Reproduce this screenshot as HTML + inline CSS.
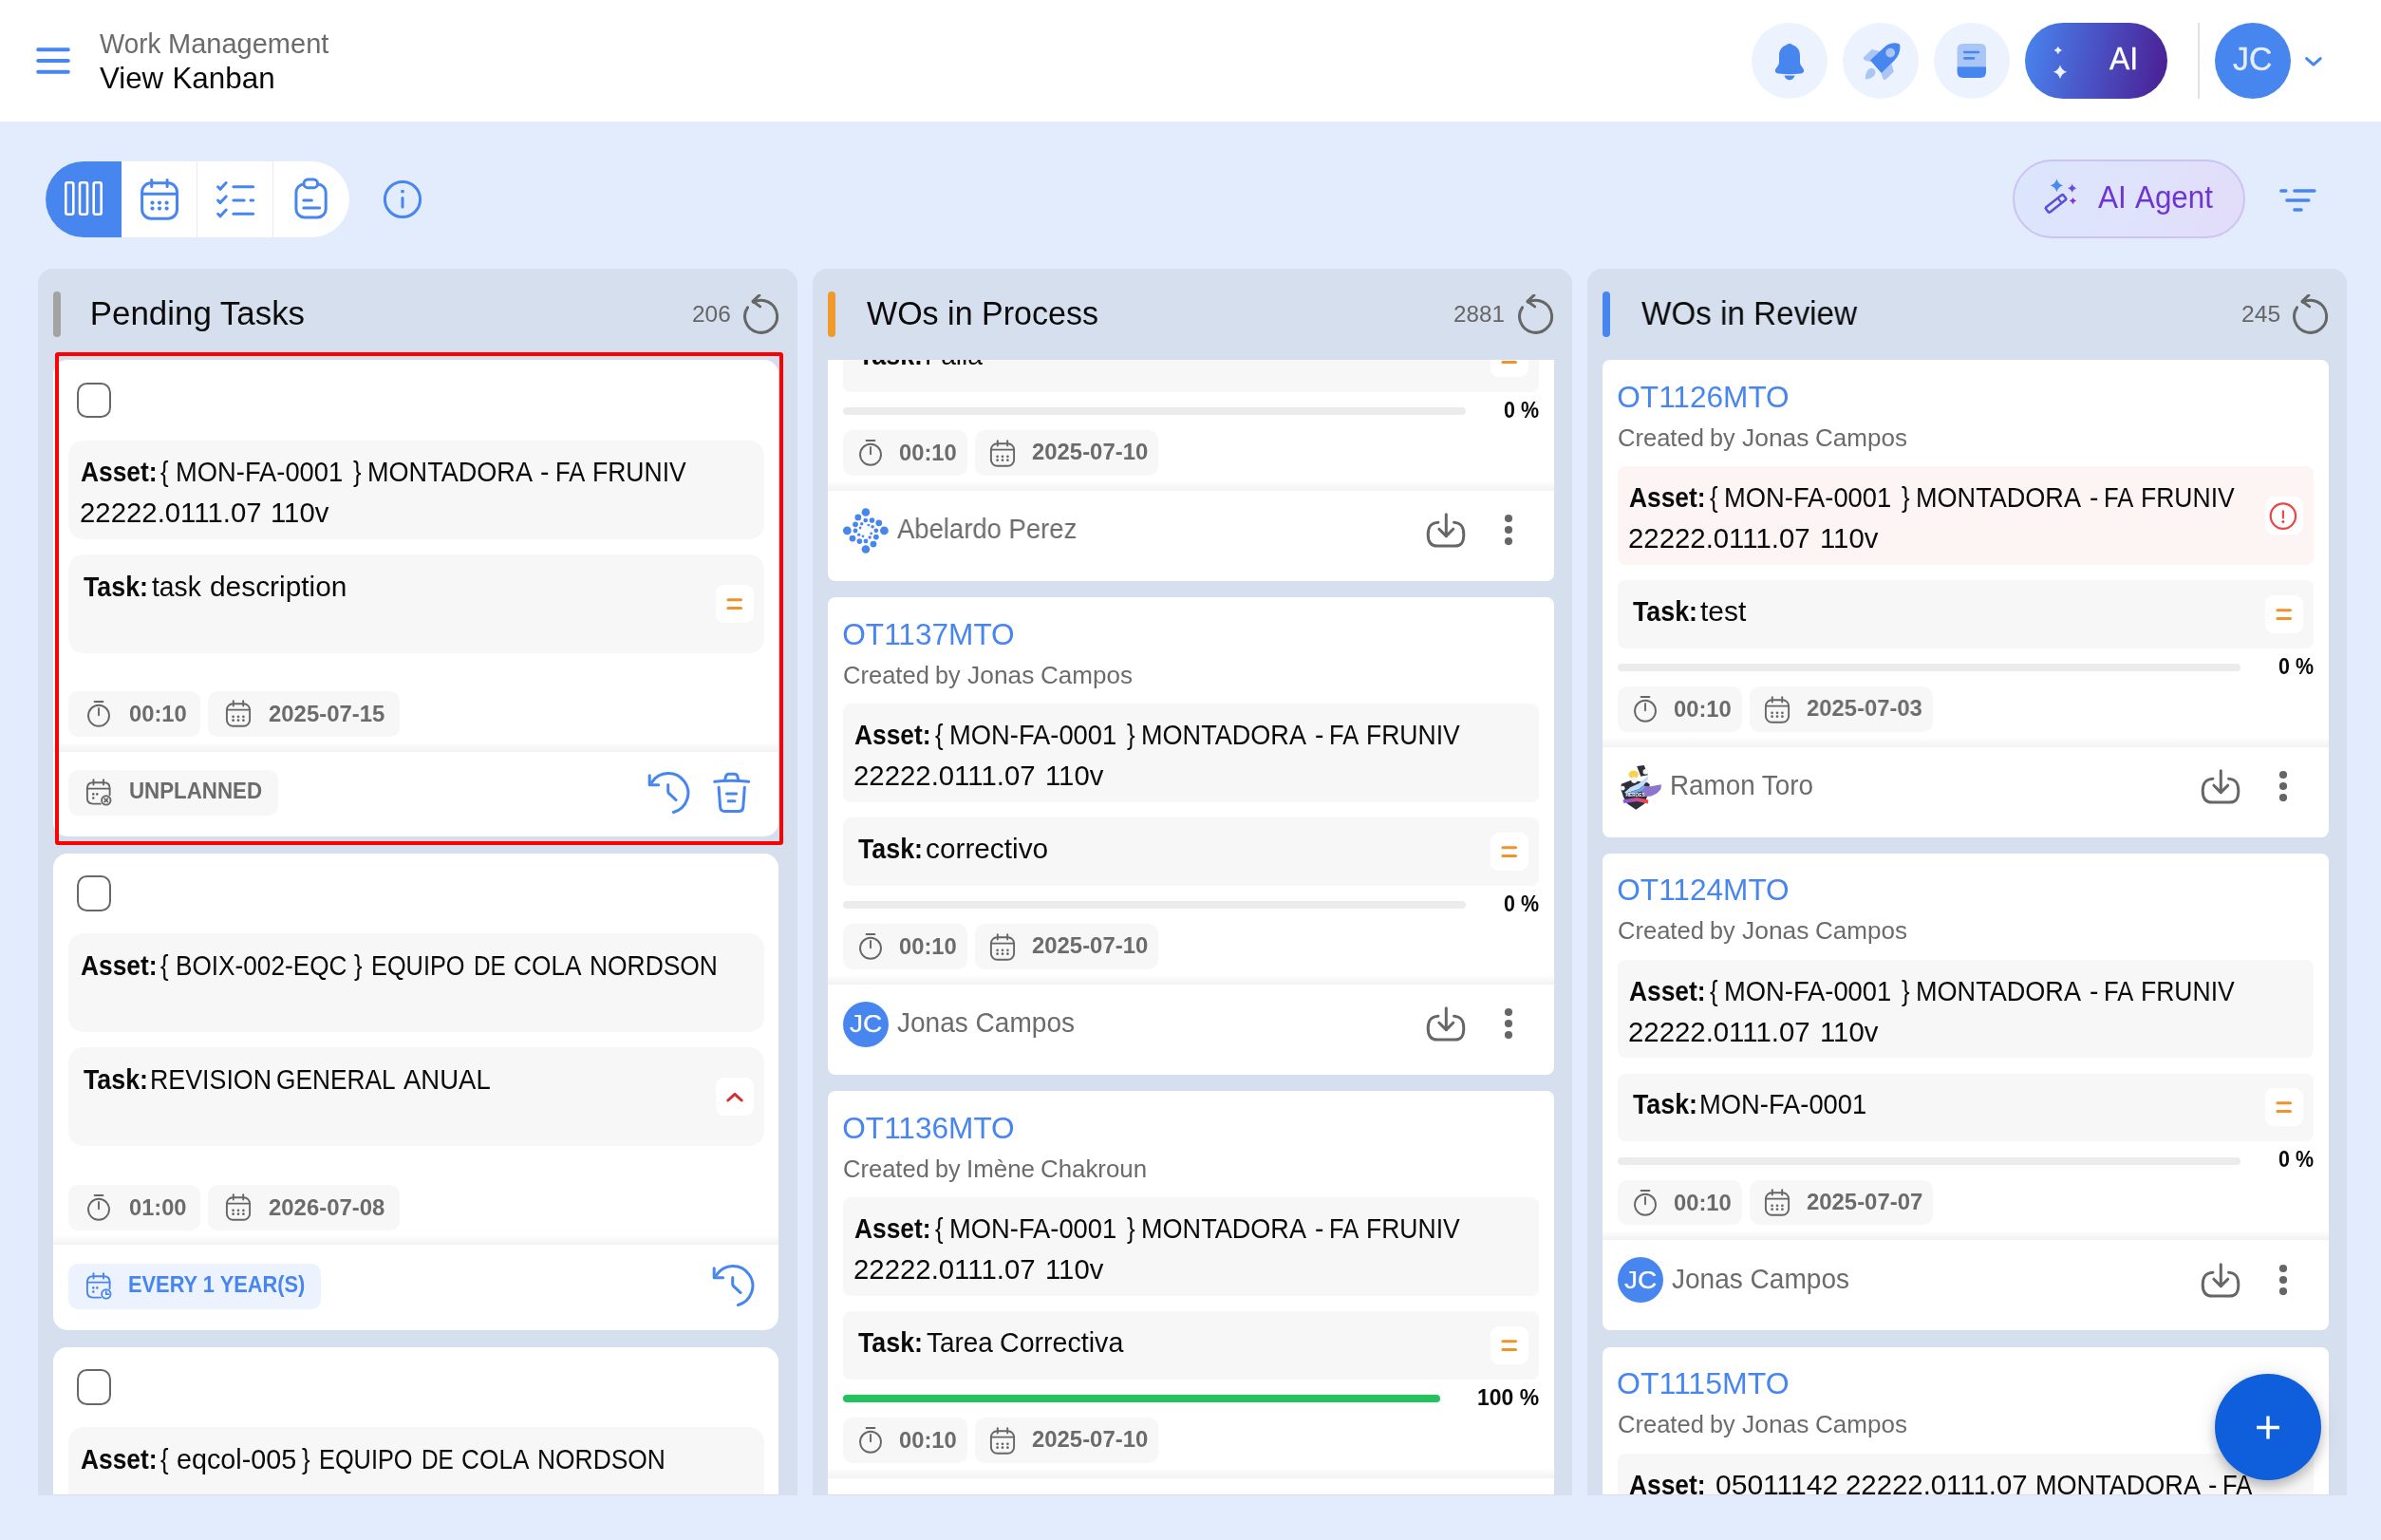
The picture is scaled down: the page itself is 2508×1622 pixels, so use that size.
<!DOCTYPE html><html lang="en"><head><meta charset="utf-8"><title>View Kanban - Work Management</title><style>

html,body{margin:0;padding:0}
body{width:2508px;height:1622px;overflow:hidden;position:relative;background:#e3ecfd;font-family:"Liberation Sans",sans-serif;}
.pg{position:absolute;left:0;top:0;width:2508px;height:1622px;will-change:transform}
@media (max-width:1400px){body{width:1254px;height:811px}.pg{zoom:.5}}
.t{position:absolute;white-space:nowrap;transform-origin:0 0}
.hdr{position:absolute;left:0;top:0;width:2508px;height:128px;background:#fff}
.col{position:absolute;top:283px;width:800px;height:1292px;background:#d5dfed;border-radius:16px 16px 0 0;overflow:hidden}
.colhead{position:absolute;left:0;top:0;width:800px;height:96.25px;background:#d5dfed}
.cards{position:absolute;left:0;top:96.25px;width:800px;height:1195px;overflow:hidden}
.card{position:absolute;left:16px;width:764px;background:#fff;border-radius:15px;overflow:hidden}
.cb{border-radius:8px}
.redbox{position:absolute;left:58.1px;top:370.9px;width:758.5px;height:510.9px;border:4.7px solid #ff0000;border-radius:3px}
.fab{position:absolute;left:2332.8px;top:1446.6px;width:112px;height:112px;border-radius:50%;background:#0f5fdd;box-shadow:0 6px 12px rgba(0,0,0,.22),0 2px 24px rgba(0,0,0,.10)}

</style></head><body><div class="pg">
<div class="hdr"><svg style="position:absolute;left:36px;top:48px" width="40" height="32" viewBox="0 0 40 32" fill="none"><path d="M4.2 4.3 H35.8 M4.2 16 H35.8 M4.2 27.8 H35.8" stroke="#4886ef" stroke-width="4" stroke-linecap="round"/></svg><div class="t" style="left:104.90px;top:27.79px;font-size:29.8px;line-height:35.76px;color:#6b6b6b;transform:scaleX(0.9316);">Work</div><div class="t" style="left:176.53px;top:27.79px;font-size:29.8px;line-height:35.76px;color:#6b6b6b;transform:scaleX(0.9737);">Management</div><div class="t" style="left:104.90px;top:63.78px;font-size:31.4px;line-height:37.68px;color:#0a0a0a;transform:scaleX(0.9959);">View</div><div class="t" style="left:181.45px;top:63.78px;font-size:31.4px;line-height:37.68px;color:#0a0a0a;">Kanban</div><div style="position:absolute;left:1845px;top:24px;width:80px;height:80px;border-radius:50%;background:#ecf2fe"></div><div style="position:absolute;left:1941px;top:24px;width:80px;height:80px;border-radius:50%;background:#ecf2fe"></div><div style="position:absolute;left:2037px;top:24px;width:80px;height:80px;border-radius:50%;background:#ecf2fe"></div><svg style="position:absolute;left:1865px;top:44px;" width="40" height="42" viewBox="0 0 40 42" fill="none"><path d="M20 1.9 C21.6 1.9 22.6 2.6 23.6 3.6 C28.6 5.6 31 9.4 31 15 V21.5 C31 23.6 32.2 25.4 33.9 27.6 C36.4 30.8 35 33.3 31.4 33.6 C23.8 34.4 16.2 34.4 8.6 33.6 C5 33.3 3.6 30.8 6.1 27.6 C7.8 25.4 9 23.6 9 21.5 V15 C9 9.4 11.4 5.6 16.4 3.6 C17.4 2.6 18.4 1.9 20 1.9 Z" fill="#4886ef"/><path d="M14.4 35.6 H25.6 C24.6 38.6 22.6 40.3 20 40.3 C17.4 40.3 15.4 38.6 14.4 35.6 Z" fill="#4886ef"/></svg><svg style="position:absolute;left:1961px;top:44px;" width="42" height="42" viewBox="0 0 42 42" fill="none"><path d="M10.7 7.9 L20 10.2 L9.2 21 L3.4 19.4 C1.6 18.9 1.2 17 2.5 15.8 Z" fill="#a9c6f7"/><path d="M31.5 22.9 L33.9 31.6 L25.8 39.3 C24.4 40.6 22.7 40.1 22.2 38.4 L20.4 32.8 Z" fill="#a9c6f7"/><path d="M3.9 39.6 C3.6 34.6 5.2 30.2 8.2 28.4 C11.4 26.6 15 29.6 14.4 33 C13.8 36.4 9.8 39 3.9 39.6 Z" fill="#a9c6f7"/><path d="M9 19.6 L25.2 4.6 C29.6 1.2 35.2 0.8 38.8 1.9 C40.3 2.4 40.3 3.6 40.4 5 C40.6 10.2 38.6 15.6 34.6 19.6 L20.8 33 Z" fill="#4886ef"/><circle cx="30.2" cy="11.6" r="4.9" fill="#a9c6f7"/></svg><svg style="position:absolute;left:2060px;top:44px;" width="34" height="40" viewBox="0 0 34 40" fill="none"><path d="M1.6 8 Q1.6 1.9 7.7 1.9 H26 Q32 1.9 32 8 V26.2 H1.6 Z" fill="#a9c6f7"/><path d="M1.6 26.2 H32 V31.8 Q32 38 26 38 H7.7 Q1.6 38 1.6 31.8 Z" fill="#4886ef"/><path d="M9.3 11 H24 M9.3 17.4 H19" stroke="#4886ef" stroke-width="2.6" stroke-linecap="round"/></svg><div style="position:absolute;left:2133px;top:24px;width:150px;height:80px;border-radius:40px;background:linear-gradient(100deg,#4886ef 0%,#4a52c4 48%,#4a1d92 100%)"></div><svg style="position:absolute;left:2150px;top:40px;" width="40" height="48" viewBox="0 0 40 48" fill="none"><path d="M17.8 8.8 Q18.724 12.076 22.0 13 Q18.724 13.924 17.8 17.2 Q16.876 13.924 13.600000000000001 13 Q16.876 12.076 17.8 8.8 Z" fill="#eef1ff"/><path d="M20 28.500000000000004 Q21.584 34.116 27.2 35.7 Q21.584 37.284000000000006 20 42.900000000000006 Q18.416 37.284000000000006 12.8 35.7 Q18.416 34.116 20 28.500000000000004 Z" fill="#eef1ff"/></svg><div class="t" style="left:2222.20px;top:43.23px;font-size:32.4px;line-height:38.88px;color:#fff;transform:scaleX(0.9825);-webkit-text-stroke:0.3px #fff;">AI</div><div style="position:absolute;left:2315px;top:24px;width:2px;height:80px;background:#e2e2e2"></div><div style="position:absolute;left:2333px;top:24px;width:80px;height:80px;border-radius:50%;background:#4886ef"></div><div class="t" style="left:2352.47px;top:40.58px;font-size:35.2px;line-height:42.24px;color:#e6eefd;transform:scaleX(0.9624);-webkit-text-stroke:0.35px #e6eefd;">JC</div><svg style="position:absolute;left:2424px;top:56px;" width="26" height="18" viewBox="0 0 26 18" fill="none"><path d="M5.6 5.6 L12.9 12.2 L20.2 5.6" stroke="#4886ef" stroke-width="3" stroke-linecap="round" stroke-linejoin="round"/></svg></div>
<div style="position:absolute;left:48px;top:169.5px;width:320px;height:80px;border-radius:40px;background:#fff;overflow:hidden"><div style="position:absolute;left:0;top:0;width:80px;height:80px;background:#4886ef"></div><div style="position:absolute;left:159px;top:0;width:1px;height:80px;background:#e4ecfd"></div><div style="position:absolute;left:239px;top:0;width:1px;height:80px;background:#e4ecfd"></div></div><svg style="position:absolute;left:66px;top:189px;" width="44" height="40" viewBox="0 0 44 40" fill="none"><g stroke="#fff" stroke-width="2.6"><rect x="3.3" y="3.3" width="8" height="33.4" rx="2"/><rect x="18" y="3.3" width="8" height="33.4" rx="2"/><rect x="32.7" y="3.3" width="8" height="33.4" rx="2"/></g></svg><svg style="position:absolute;left:146px;top:186px;" width="44" height="48" viewBox="0 0 44 48" fill="none"><g stroke="#4886ef" stroke-width="3" stroke-linecap="round"><rect x="3.6" y="6.7" width="36.9" height="37.5" rx="9.6"/><path d="M13.7 3.6 V10.6 M30.1 3.6 V10.6"/><path d="M4 18.3 H40"/></g><g fill="#4886ef"><circle cx="14.5" cy="27.6" r="2.1"/><circle cx="22" cy="27.6" r="2.1"/><circle cx="29.6" cy="27.6" r="2.1"/><circle cx="14.5" cy="33.6" r="2.1"/><circle cx="22" cy="33.6" r="2.1"/><circle cx="29.6" cy="33.6" r="2.1"/></g></svg><svg style="position:absolute;left:226px;top:188px;" width="46" height="44" viewBox="0 0 46 44" fill="none"><g stroke="#4886ef" stroke-width="3" stroke-linecap="round" stroke-linejoin="round"><path d="M3.6 8.8 L6 11.3 L12.2 4.6"/><path d="M3.6 23.1 L6 25.6 L12.2 18.9"/><path d="M3.6 37.3 L6 39.8 L12.2 33.1"/><path d="M19.9 8.7 H40.6"/><path d="M19.9 23 H31.2"/><path d="M38 23 H40.6"/><path d="M19.9 37.2 H40.6"/></g></svg><svg style="position:absolute;left:308px;top:185px;" width="40" height="48" viewBox="0 0 40 48" fill="none"><g stroke="#4886ef" stroke-width="3" stroke-linecap="round"><rect x="3.9" y="8.9" width="31.3" height="35.1" rx="8.8"/><rect x="12" y="4.1" width="14.6" height="8.6" rx="4.3" fill="#fff"/><path d="M11.8 26 H20.4 M11.8 34.1 H28.6"/></g></svg><svg style="position:absolute;left:402px;top:187.5px;" width="44" height="44" viewBox="0 0 44 44" fill="none"><circle cx="22" cy="22" r="18.6" stroke="#4886ef" stroke-width="3"/><path d="M22 20.4 V30" stroke="#4886ef" stroke-width="3" stroke-linecap="round"/><circle cx="22" cy="13.6" r="1.9" fill="#4886ef"/></svg><div style="position:absolute;left:2120px;top:168px;width:244.5px;height:83px;box-sizing:border-box;border:2px solid #cdc2f1;border-radius:42px;background:linear-gradient(110deg,#dbe6fd 0%,#dfe2fb 55%,#e3dcf9 100%)"></div><svg style="position:absolute;left:2153.2px;top:187.2px;" width="40" height="40" viewBox="0 0 40 40" fill="none"><path d="M13.4 1.4000000000000004 Q14.918000000000001 6.782000000000001 20.3 8.3 Q14.918000000000001 9.818000000000001 13.4 15.200000000000001 Q11.882 9.818000000000001 6.5 8.3 Q11.882 6.782000000000001 13.4 1.4000000000000004 Z" fill="#4a8af0"/><path d="M29.7 6.6 Q30.712 10.187999999999999 34.3 11.2 Q30.712 12.212 29.7 15.799999999999999 Q28.688 12.212 25.1 11.2 Q28.688 10.187999999999999 29.7 6.6 Z" fill="#6a50e0"/><path d="M30.5 21.0 Q31.292 23.808 34.1 24.6 Q31.292 25.392000000000003 30.5 28.200000000000003 Q29.708 25.392000000000003 26.9 24.6 Q29.708 23.808 30.5 21.0 Z" fill="#8a2bd8"/><g transform="rotate(-38 12.4 27.4)"><rect x="0.8" y="24.2" width="23.4" height="6.6" rx="1.6" stroke="#5b4fd6" stroke-width="2.5"/><path d="M17.6 24.2 V30.8" stroke="#5b4fd6" stroke-width="2.2"/></g></svg><div class="t" style="left:2210.10px;top:188.45px;font-size:32.7px;line-height:39.24px;color:#6f35d3;transform:scaleX(0.9663);">AI</div><div class="t" style="left:2248.60px;top:188.45px;font-size:32.7px;line-height:39.24px;color:#6f35d3;transform:scaleX(0.9583);">Agent</div><svg style="position:absolute;left:2398px;top:196px;" width="46" height="30" viewBox="0 0 46 30" fill="none"><g stroke="#4886ef" stroke-width="3.4" stroke-linecap="round"><path d="M4.8 5 H9.9"/><path d="M18.9 5 H39.9"/><path d="M10.9 15 H33.8"/><path d="M18.9 25 H26"/></g></svg>
<div class="col" style="left:40px"><div class="cards"><div class="card" style="top:0px;height:502.2px"><div style="position:absolute;left:25.2px;top:23.4px;width:36px;height:37.4px;box-sizing:border-box;border:2px solid #686868;border-radius:10.5px"></div><div style="position:absolute;left:16px;top:84.7px;width:732.5px;height:103.6px;background:#f7f7f7;border-radius:16px"></div><div class="t" style="left:28.59px;top:99.88px;font-size:29.6px;line-height:35.52px;color:#0a0a0a;font-weight:700;transform:scaleX(0.8908);">Asset:</div><div class="t" style="left:113.10px;top:99.88px;font-size:29.6px;line-height:35.52px;color:#0a0a0a;transform:scaleX(0.8649);">{</div><div class="t" style="left:128.87px;top:99.88px;font-size:29.6px;line-height:35.52px;color:#0a0a0a;transform:scaleX(0.9237);">MON-FA-0001</div><div class="t" style="left:315.60px;top:99.88px;font-size:29.6px;line-height:35.52px;color:#0a0a0a;transform:scaleX(0.8649);">}</div><div class="t" style="left:330.64px;top:99.88px;font-size:29.6px;line-height:35.52px;color:#0a0a0a;transform:scaleX(0.9147);">MONTADORA</div><div class="t" style="left:513.11px;top:99.88px;font-size:29.6px;line-height:35.52px;color:#0a0a0a;transform:scaleX(0.9539);">-</div><div class="t" style="left:528.75px;top:99.88px;font-size:29.6px;line-height:35.52px;color:#0a0a0a;transform:scaleX(0.8641);">FA</div><div class="t" style="left:567.68px;top:99.88px;font-size:29.6px;line-height:35.52px;color:#0a0a0a;transform:scaleX(0.8958);">FRUNIV</div><div class="t" style="left:27.62px;top:143.08px;font-size:29.6px;line-height:35.52px;color:#0a0a0a;transform:scaleX(0.9919);">22222.0111.07</div><div class="t" style="left:229.17px;top:143.08px;font-size:29.6px;line-height:35.52px;color:#0a0a0a;transform:scaleX(0.9894);">110v</div><div style="position:absolute;left:16px;top:204.7px;width:732.5px;height:103.6px;background:#f7f7f7;border-radius:16px"></div><div class="t" style="left:32.00px;top:220.58px;font-size:29.6px;line-height:35.52px;color:#0a0a0a;font-weight:700;transform:scaleX(0.9048);">Task:</div><div class="t" style="left:103.70px;top:220.58px;font-size:29.6px;line-height:35.52px;color:#0a0a0a;transform:scaleX(0.9553);">task</div><div class="t" style="left:164.76px;top:220.58px;font-size:29.6px;line-height:35.52px;color:#0a0a0a;transform:scaleX(1.0096);">description</div><div style="position:absolute;left:697.8px;top:236.6px;width:40px;height:40px;border-radius:9px;background:#fff"><svg width="40" height="40" viewBox="0 0 40 40" fill="none" style="display:block"><path d="M12.9 15.8 H26.5 M12.9 24.4 H26.5" stroke="#f0932b" stroke-width="3" stroke-linecap="round"/></svg></div><div style="position:absolute;left:16px;top:348.9px;width:139.3px;height:48px;border-radius:10px;background:#f7f7f7"><svg style="position:absolute;left:19px;top:8.9px;" width="26" height="30" viewBox="0 0 26 30" fill="none"><g stroke="#666" stroke-width="1.9" stroke-linecap="round"><circle cx="13" cy="16.8" r="11"/><path d="M8.6 2 H17.4"/><path d="M13 9 V16.2"/></g></svg><div class="t" style="left:63.65px;top:9.13px;font-size:24.8px;line-height:29.76px;color:#6b6b6b;font-weight:700;transform:scaleX(0.9570);">00:10</div></div><div style="position:absolute;left:163.3px;top:348.9px;width:201.4px;height:48px;border-radius:10px;background:#f7f7f7"><svg style="position:absolute;left:17.8px;top:9.1px;" width="28" height="30" viewBox="0 0 28 30" fill="none"><g stroke="#666" stroke-width="1.9" stroke-linecap="round"><rect x="1.9" y="4.2" width="24.2" height="23.6" rx="6.5"/><path d="M8.8 1.2 V6.6"/><path d="M19.2 1.2 V6.6"/><path d="M2.2 10.6 H25.8"/></g><g fill="#666"><circle cx="8.6" cy="17.8" r="1.35"/><circle cx="14" cy="17.8" r="1.35"/><circle cx="19.4" cy="17.8" r="1.35"/><circle cx="8.6" cy="21.7" r="1.35"/><circle cx="14" cy="21.7" r="1.35"/><circle cx="19.4" cy="21.7" r="1.35"/></g></svg><div class="t" style="left:63.85px;top:9.13px;font-size:24.8px;line-height:29.76px;color:#6b6b6b;font-weight:700;transform:scaleX(0.9644);">2025-07-15</div></div><div style="position:absolute;left:0;top:402.2px;width:764px;height:10.5px;background:linear-gradient(#fff,#f2f2f2)"></div><div style="position:absolute;left:16px;top:432.1px;width:220.6px;height:48px;border-radius:10px;background:#f7f7f7"><svg style="position:absolute;left:17.6px;top:9px;" width="30" height="30" viewBox="0 0 30 30" fill="none"><g stroke="#666" stroke-width="1.9" stroke-linecap="round"><path d="M16 26.6 H8 Q1.9 26.6 1.9 20.5 V10.3 Q1.9 4.2 8 4.2 H19.5 Q25.6 4.2 25.6 10.3 V17.2"/><path d="M8.5 1.2 V6.6"/><path d="M19 1.2 V6.6"/><path d="M2.2 10.6 H25.4"/><circle cx="21.8" cy="22.9" r="4.7"/><path d="M20.1 21.2 L23.5 24.6 M23.5 21.2 L20.1 24.6" stroke-width="1.7"/></g><g fill="#666"><circle cx="8.3" cy="16.4" r="1.3"/><circle cx="12.3" cy="16.4" r="1.3"/><circle cx="8.3" cy="20.6" r="1.3"/></g></svg><div class="t" style="left:63.96px;top:6.63px;font-size:24.8px;line-height:29.76px;color:#6b6b6b;font-weight:700;transform:scaleX(0.9000);">UNPLANNED</div></div><svg style="position:absolute;left:626px;top:433.5px;" width="46" height="46" viewBox="0 0 46 46" fill="none"><g stroke="#4886ef" stroke-width="3" stroke-linecap="round" stroke-linejoin="round"><path d="M4.55 11.15 A20.8 20.8 0 1 1 27.4 42.5"/><path d="M2.2 3.75 V13.85 H11.6"/><path d="M21.7 13.5 V20 Q21.7 22.6 24 23.9 L30.1 29.6"/></g></svg><svg style="position:absolute;left:694px;top:432.6px;" width="42" height="46" viewBox="0 0 42 46" fill="none"><g stroke="#4886ef" stroke-width="3" stroke-linecap="round" stroke-linejoin="round"><path d="M2.7 11.3 Q20.7 9 38.7 11.3"/><path d="M13.5 9.9 L14.6 5.6 Q15.2 3.2 17.6 3.2 H23.8 Q26.2 3.2 26.8 5.6 L27.8 9.9"/><path d="M7.1 17.3 L8.6 38 Q9 42.5 13.5 42.5 H28 Q32.4 42.5 32.8 38 L34.3 17.3"/><path d="M15.5 24 H25.6"/><path d="M17.2 31.7 H23.9"/></g></svg></div><div class="card" style="top:519.5px;height:502.2px"><div style="position:absolute;left:25.2px;top:23.4px;width:36px;height:37.4px;box-sizing:border-box;border:2px solid #686868;border-radius:10.5px"></div><div style="position:absolute;left:16px;top:84.7px;width:732.5px;height:103.6px;background:#f7f7f7;border-radius:16px"></div><div class="t" style="left:28.59px;top:99.88px;font-size:29.6px;line-height:35.52px;color:#0a0a0a;font-weight:700;transform:scaleX(0.8908);">Asset:</div><div class="t" style="left:113.10px;top:99.88px;font-size:29.6px;line-height:35.52px;color:#0a0a0a;transform:scaleX(0.8649);">{</div><div class="t" style="left:129.46px;top:99.88px;font-size:29.6px;line-height:35.52px;color:#0a0a0a;transform:scaleX(0.8847);">BOIX-002-EQC</div><div class="t" style="left:316.60px;top:99.88px;font-size:29.6px;line-height:35.52px;color:#0a0a0a;transform:scaleX(0.8649);">}</div><div class="t" style="left:334.52px;top:99.88px;font-size:29.6px;line-height:35.52px;color:#0a0a0a;transform:scaleX(0.8562);">EQUIPO</div><div class="t" style="left:442.70px;top:99.88px;font-size:29.6px;line-height:35.52px;color:#0a0a0a;transform:scaleX(0.8226);">DE</div><div class="t" style="left:485.07px;top:99.88px;font-size:29.6px;line-height:35.52px;color:#0a0a0a;transform:scaleX(0.8871);">COLA</div><div class="t" style="left:565.34px;top:99.88px;font-size:29.6px;line-height:35.52px;color:#0a0a0a;transform:scaleX(0.8917);">NORDSON</div><div style="position:absolute;left:16px;top:204.7px;width:732.5px;height:103.6px;background:#f7f7f7;border-radius:16px"></div><div class="t" style="left:32.00px;top:220.58px;font-size:29.6px;line-height:35.52px;color:#0a0a0a;font-weight:700;transform:scaleX(0.9048);">Task:</div><div class="t" style="left:101.91px;top:220.58px;font-size:29.6px;line-height:35.52px;color:#0a0a0a;transform:scaleX(0.9051);">REVISION</div><div class="t" style="left:235.27px;top:220.58px;font-size:29.6px;line-height:35.52px;color:#0a0a0a;transform:scaleX(0.8881);">GENERAL</div><div class="t" style="left:368.50px;top:220.58px;font-size:29.6px;line-height:35.52px;color:#0a0a0a;transform:scaleX(0.9289);">ANUAL</div><div style="position:absolute;left:697.8px;top:236.6px;width:40px;height:40px;border-radius:9px;background:#fff"><svg width="40" height="40" viewBox="0 0 40 40" fill="none" style="display:block"><path d="M12.8 24 L20 17.4 L27.2 24" stroke="#d32f2f" stroke-width="3" stroke-linecap="round" stroke-linejoin="round"/></svg></div><div style="position:absolute;left:16px;top:348.9px;width:139.3px;height:48px;border-radius:10px;background:#f7f7f7"><svg style="position:absolute;left:19px;top:8.9px;" width="26" height="30" viewBox="0 0 26 30" fill="none"><g stroke="#666" stroke-width="1.9" stroke-linecap="round"><circle cx="13" cy="16.8" r="11"/><path d="M8.6 2 H17.4"/><path d="M13 9 V16.2"/></g></svg><div class="t" style="left:63.66px;top:9.13px;font-size:24.8px;line-height:29.76px;color:#6b6b6b;font-weight:700;transform:scaleX(0.9522);">01:00</div></div><div style="position:absolute;left:163.3px;top:348.9px;width:201.4px;height:48px;border-radius:10px;background:#f7f7f7"><svg style="position:absolute;left:17.8px;top:9.1px;" width="28" height="30" viewBox="0 0 28 30" fill="none"><g stroke="#666" stroke-width="1.9" stroke-linecap="round"><rect x="1.9" y="4.2" width="24.2" height="23.6" rx="6.5"/><path d="M8.8 1.2 V6.6"/><path d="M19.2 1.2 V6.6"/><path d="M2.2 10.6 H25.8"/></g><g fill="#666"><circle cx="8.6" cy="17.8" r="1.35"/><circle cx="14" cy="17.8" r="1.35"/><circle cx="19.4" cy="17.8" r="1.35"/><circle cx="8.6" cy="21.7" r="1.35"/><circle cx="14" cy="21.7" r="1.35"/><circle cx="19.4" cy="21.7" r="1.35"/></g></svg><div class="t" style="left:63.85px;top:9.13px;font-size:24.8px;line-height:29.76px;color:#6b6b6b;font-weight:700;transform:scaleX(0.9644);">2026-07-08</div></div><div style="position:absolute;left:0;top:402.2px;width:764px;height:10.5px;background:linear-gradient(#fff,#f2f2f2)"></div><div style="position:absolute;left:16px;top:432.1px;width:265.5px;height:48px;border-radius:10px;background:#ecf2fe"><svg style="position:absolute;left:17.6px;top:9px;" width="30" height="30" viewBox="0 0 30 30" fill="none"><g stroke="#4886ef" stroke-width="1.9" stroke-linecap="round"><path d="M16 26.6 H8 Q1.9 26.6 1.9 20.5 V10.3 Q1.9 4.2 8 4.2 H19.5 Q25.6 4.2 25.6 10.3 V17.2"/><path d="M8.5 1.2 V6.6"/><path d="M19 1.2 V6.6"/><path d="M2.2 10.6 H25.4"/><circle cx="21.8" cy="22.9" r="4.7"/><path d="M21.8 20.3 V23.1 H24.3" stroke-width="1.7"/></g><g fill="#4886ef"><circle cx="8.3" cy="16.4" r="1.3"/><circle cx="12.3" cy="16.4" r="1.3"/><circle cx="8.3" cy="20.6" r="1.3"/></g></svg><div class="t" style="left:62.89px;top:7.03px;font-size:24.8px;line-height:29.76px;color:#4886ef;font-weight:700;transform:scaleX(0.8799);">EVERY 1 YEAR(S)</div></div><svg style="position:absolute;left:693.5px;top:433.5px;" width="46" height="46" viewBox="0 0 46 46" fill="none"><g stroke="#4886ef" stroke-width="3" stroke-linecap="round" stroke-linejoin="round"><path d="M4.55 11.15 A20.8 20.8 0 1 1 27.4 42.5"/><path d="M2.2 3.75 V13.85 H11.6"/><path d="M21.7 13.5 V20 Q21.7 22.6 24 23.9 L30.1 29.6"/></g></svg></div><div class="card" style="top:1039.5px;height:502.2px"><div style="position:absolute;left:25.2px;top:23.4px;width:36px;height:37.4px;box-sizing:border-box;border:2px solid #686868;border-radius:10.5px"></div><div style="position:absolute;left:16px;top:84.7px;width:732.5px;height:103.6px;background:#f7f7f7;border-radius:16px"></div><div class="t" style="left:28.59px;top:99.88px;font-size:29.6px;line-height:35.52px;color:#0a0a0a;font-weight:700;transform:scaleX(0.8908);">Asset:</div><div class="t" style="left:113.10px;top:99.88px;font-size:29.6px;line-height:35.52px;color:#0a0a0a;transform:scaleX(0.8649);">{</div><div class="t" style="left:130.10px;top:99.88px;font-size:29.6px;line-height:35.52px;color:#0a0a0a;transform:scaleX(0.9716);">eqcol-005</div><div class="t" style="left:262.35px;top:99.88px;font-size:29.6px;line-height:35.52px;color:#0a0a0a;transform:scaleX(0.8649);">}</div><div class="t" style="left:279.52px;top:99.88px;font-size:29.6px;line-height:35.52px;color:#0a0a0a;transform:scaleX(0.8562);">EQUIPO</div><div class="t" style="left:387.70px;top:99.88px;font-size:29.6px;line-height:35.52px;color:#0a0a0a;transform:scaleX(0.8226);">DE</div><div class="t" style="left:430.07px;top:99.88px;font-size:29.6px;line-height:35.52px;color:#0a0a0a;transform:scaleX(0.8871);">COLA</div><div class="t" style="left:510.34px;top:99.88px;font-size:29.6px;line-height:35.52px;color:#0a0a0a;transform:scaleX(0.8917);">NORDSON</div><div style="position:absolute;left:16px;top:204.7px;width:732.5px;height:103.6px;background:#f7f7f7;border-radius:16px"></div><div class="t" style="left:32.00px;top:220.58px;font-size:29.6px;line-height:35.52px;color:#0a0a0a;font-weight:700;transform:scaleX(0.9048);">Task:</div><div class="t" style="left:103.70px;top:220.58px;font-size:29.6px;line-height:35.52px;color:#0a0a0a;transform:scaleX(0.9553);">task</div><div class="t" style="left:164.76px;top:220.58px;font-size:29.6px;line-height:35.52px;color:#0a0a0a;transform:scaleX(1.0096);">description</div><div style="position:absolute;left:697.8px;top:236.6px;width:40px;height:40px;border-radius:9px;background:#fff"><svg width="40" height="40" viewBox="0 0 40 40" fill="none" style="display:block"><path d="M12.9 15.8 H26.5 M12.9 24.4 H26.5" stroke="#f0932b" stroke-width="3" stroke-linecap="round"/></svg></div><div style="position:absolute;left:16px;top:348.9px;width:139.3px;height:48px;border-radius:10px;background:#f7f7f7"><svg style="position:absolute;left:19px;top:8.9px;" width="26" height="30" viewBox="0 0 26 30" fill="none"><g stroke="#666" stroke-width="1.9" stroke-linecap="round"><circle cx="13" cy="16.8" r="11"/><path d="M8.6 2 H17.4"/><path d="M13 9 V16.2"/></g></svg><div class="t" style="left:63.65px;top:9.13px;font-size:24.8px;line-height:29.76px;color:#6b6b6b;font-weight:700;transform:scaleX(0.9570);">00:10</div></div><div style="position:absolute;left:163.3px;top:348.9px;width:201.4px;height:48px;border-radius:10px;background:#f7f7f7"><svg style="position:absolute;left:17.8px;top:9.1px;" width="28" height="30" viewBox="0 0 28 30" fill="none"><g stroke="#666" stroke-width="1.9" stroke-linecap="round"><rect x="1.9" y="4.2" width="24.2" height="23.6" rx="6.5"/><path d="M8.8 1.2 V6.6"/><path d="M19.2 1.2 V6.6"/><path d="M2.2 10.6 H25.8"/></g><g fill="#666"><circle cx="8.6" cy="17.8" r="1.35"/><circle cx="14" cy="17.8" r="1.35"/><circle cx="19.4" cy="17.8" r="1.35"/><circle cx="8.6" cy="21.7" r="1.35"/><circle cx="14" cy="21.7" r="1.35"/><circle cx="19.4" cy="21.7" r="1.35"/></g></svg><div class="t" style="left:63.85px;top:9.13px;font-size:24.8px;line-height:29.76px;color:#6b6b6b;font-weight:700;transform:scaleX(0.9644);">2025-07-15</div></div><div style="position:absolute;left:0;top:402.2px;width:764px;height:10.5px;background:linear-gradient(#fff,#f2f2f2)"></div><div style="position:absolute;left:16px;top:432.1px;width:220.6px;height:48px;border-radius:10px;background:#f7f7f7"><svg style="position:absolute;left:17.6px;top:9px;" width="30" height="30" viewBox="0 0 30 30" fill="none"><g stroke="#666" stroke-width="1.9" stroke-linecap="round"><path d="M16 26.6 H8 Q1.9 26.6 1.9 20.5 V10.3 Q1.9 4.2 8 4.2 H19.5 Q25.6 4.2 25.6 10.3 V17.2"/><path d="M8.5 1.2 V6.6"/><path d="M19 1.2 V6.6"/><path d="M2.2 10.6 H25.4"/><circle cx="21.8" cy="22.9" r="4.7"/><path d="M20.1 21.2 L23.5 24.6 M23.5 21.2 L20.1 24.6" stroke-width="1.7"/></g><g fill="#666"><circle cx="8.3" cy="16.4" r="1.3"/><circle cx="12.3" cy="16.4" r="1.3"/><circle cx="8.3" cy="20.6" r="1.3"/></g></svg><div class="t" style="left:63.96px;top:6.63px;font-size:24.8px;line-height:29.76px;color:#6b6b6b;font-weight:700;transform:scaleX(0.9000);">UNPLANNED</div></div><svg style="position:absolute;left:626px;top:433.5px;" width="46" height="46" viewBox="0 0 46 46" fill="none"><g stroke="#4886ef" stroke-width="3" stroke-linecap="round" stroke-linejoin="round"><path d="M4.55 11.15 A20.8 20.8 0 1 1 27.4 42.5"/><path d="M2.2 3.75 V13.85 H11.6"/><path d="M21.7 13.5 V20 Q21.7 22.6 24 23.9 L30.1 29.6"/></g></svg><svg style="position:absolute;left:694px;top:432.6px;" width="42" height="46" viewBox="0 0 42 46" fill="none"><g stroke="#4886ef" stroke-width="3" stroke-linecap="round" stroke-linejoin="round"><path d="M2.7 11.3 Q20.7 9 38.7 11.3"/><path d="M13.5 9.9 L14.6 5.6 Q15.2 3.2 17.6 3.2 H23.8 Q26.2 3.2 26.8 5.6 L27.8 9.9"/><path d="M7.1 17.3 L8.6 38 Q9 42.5 13.5 42.5 H28 Q32.4 42.5 32.8 38 L34.3 17.3"/><path d="M15.5 24 H25.6"/><path d="M17.2 31.7 H23.9"/></g></svg></div></div><div class="colhead"></div><div style="position:absolute;left:16px;top:24px;width:8px;height:48px;border-radius:4px;background:#a3a3a3"></div><div class="t" style="left:54.76px;top:26.17px;font-size:34.9px;line-height:41.88px;color:#0a0a0a;">Pending Tasks</div><div class="t" style="left:689.16px;top:33.12px;font-size:24.6px;line-height:29.52px;color:#666;transform:scaleX(0.9924);">206</div><svg style="position:absolute;left:743px;top:27px;" width="40" height="44" viewBox="0 0 40 44" fill="none"><g stroke="#666" stroke-width="3" stroke-linecap="round" stroke-linejoin="round"><path d="M10.6 8.3 A17 17 0 1 1 4.5 13.8"/><path d="M16.9 0.9 L10 7.4 L17.6 12.9"/></g></svg></div>
<div class="col" style="left:856px"><div class="cards"><div class="card cb" style="top:-270px;height:502.4px;width:765px"><div class="t" style="left:15.27px;top:20.49px;font-size:31.6px;line-height:37.92px;color:#4886ef;">OT1138MTO</div><div class="t" style="left:15.55px;top:66.30px;font-size:26.2px;line-height:31.44px;color:#6b6b6b;transform:scaleX(0.9750);">Created</div><div class="t" style="left:112.68px;top:66.30px;font-size:26.2px;line-height:31.44px;color:#6b6b6b;transform:scaleX(0.9603);">by</div><div class="t" style="left:147.09px;top:66.30px;font-size:26.2px;line-height:31.44px;color:#6b6b6b;transform:scaleX(1.0082);">Jonas</div><div class="t" style="left:223.78px;top:66.30px;font-size:26.2px;line-height:31.44px;color:#6b6b6b;transform:scaleX(0.9946);">Campos</div><div style="position:absolute;left:16px;top:112px;width:733px;height:103.5px;background:#f7f7f7;border-radius:8px"></div><div class="t" style="left:28.19px;top:126.98px;font-size:29.6px;line-height:35.52px;color:#0a0a0a;font-weight:700;transform:scaleX(0.8908);">Asset:</div><div class="t" style="left:112.70px;top:126.98px;font-size:29.6px;line-height:35.52px;color:#0a0a0a;transform:scaleX(0.8649);">{</div><div class="t" style="left:128.47px;top:126.98px;font-size:29.6px;line-height:35.52px;color:#0a0a0a;transform:scaleX(0.9237);">MON-FA-0001</div><div class="t" style="left:315.20px;top:126.98px;font-size:29.6px;line-height:35.52px;color:#0a0a0a;transform:scaleX(0.8649);">}</div><div class="t" style="left:330.24px;top:126.98px;font-size:29.6px;line-height:35.52px;color:#0a0a0a;transform:scaleX(0.9147);">MONTADORA</div><div class="t" style="left:512.71px;top:126.98px;font-size:29.6px;line-height:35.52px;color:#0a0a0a;transform:scaleX(0.9539);">-</div><div class="t" style="left:528.35px;top:126.98px;font-size:29.6px;line-height:35.52px;color:#0a0a0a;transform:scaleX(0.8641);">FA</div><div class="t" style="left:567.28px;top:126.98px;font-size:29.6px;line-height:35.52px;color:#0a0a0a;transform:scaleX(0.8958);">FRUNIV</div><div class="t" style="left:27.22px;top:170.18px;font-size:29.6px;line-height:35.52px;color:#0a0a0a;transform:scaleX(0.9919);">22222.0111.07</div><div class="t" style="left:228.77px;top:170.18px;font-size:29.6px;line-height:35.52px;color:#0a0a0a;transform:scaleX(0.9894);">110v</div><div style="position:absolute;left:16px;top:232px;width:733px;height:71.6px;background:#f7f7f7;border-radius:8px"></div><div class="t" style="left:32.25px;top:246.48px;font-size:29.6px;line-height:35.52px;color:#0a0a0a;font-weight:700;transform:scaleX(0.9048);">Task:</div><div class="t" style="left:101.56px;top:246.48px;font-size:29.6px;line-height:35.52px;color:#0a0a0a;transform:scaleX(0.9479);">Falla</div><div style="position:absolute;left:698px;top:247.5px;width:40px;height:40px;border-radius:9px;background:#fff"><svg width="40" height="40" viewBox="0 0 40 40" fill="none" style="display:block"><path d="M12.9 15.8 H26.5 M12.9 24.4 H26.5" stroke="#f0932b" stroke-width="3" stroke-linecap="round"/></svg></div><div style="position:absolute;left:16px;top:320px;width:656px;height:8px;border-radius:4px;background:#ebebeb"></div><div class="t" style="left:711.83px;top:307.52px;font-size:24.6px;line-height:29.52px;color:#0a0a0a;font-weight:700;transform:scaleX(0.8723);">0 %</div><div style="position:absolute;left:16px;top:343.8px;width:131.2px;height:47.6px;border-radius:10px;background:#f7f7f7"><svg style="position:absolute;left:16px;top:9.4px;" width="26" height="30" viewBox="0 0 26 30" fill="none"><g stroke="#666" stroke-width="1.9" stroke-linecap="round"><circle cx="13" cy="16.8" r="11"/><path d="M8.6 2 H17.4"/><path d="M13 9 V16.2"/></g></svg><div class="t" style="left:59.25px;top:9.13px;font-size:24.8px;line-height:29.76px;color:#6b6b6b;font-weight:700;transform:scaleX(0.9570);">00:10</div></div><div style="position:absolute;left:155px;top:343.8px;width:193.4px;height:47.6px;border-radius:10px;background:#f7f7f7"><svg style="position:absolute;left:14.6px;top:9.6px;" width="28" height="30" viewBox="0 0 28 30" fill="none"><g stroke="#666" stroke-width="1.9" stroke-linecap="round"><rect x="1.9" y="4.2" width="24.2" height="23.6" rx="6.5"/><path d="M8.8 1.2 V6.6"/><path d="M19.2 1.2 V6.6"/><path d="M2.2 10.6 H25.8"/></g><g fill="#666"><circle cx="8.6" cy="17.8" r="1.35"/><circle cx="14" cy="17.8" r="1.35"/><circle cx="19.4" cy="17.8" r="1.35"/><circle cx="8.6" cy="21.7" r="1.35"/><circle cx="14" cy="21.7" r="1.35"/><circle cx="19.4" cy="21.7" r="1.35"/></g></svg><div class="t" style="left:59.75px;top:8.13px;font-size:24.8px;line-height:29.76px;color:#6b6b6b;font-weight:700;transform:scaleX(0.9634);">2025-07-10</div></div><div style="position:absolute;left:0;top:397.2px;width:765px;height:10.5px;background:linear-gradient(#fff,#f2f2f2)"></div><svg style="position:absolute;left:16px;top:425.6px;" width="48" height="48" viewBox="0 0 48 48" fill="none"><g fill="#4886ef"><circle cx="23.9" cy="4.46" r="4.3"/><circle cx="15.84" cy="9.9" r="3.4"/><circle cx="23.75" cy="13.03" r="2.4"/><circle cx="30.46" cy="13.03" r="2.8"/><circle cx="37.77" cy="15.85" r="3.4"/><circle cx="13.02" cy="17.36" r="2.9"/><circle cx="19.72" cy="16.7" r="1.7"/><circle cx="26.88" cy="18.12" r="1.4"/><circle cx="31.06" cy="19.73" r="1.8"/><circle cx="4.35" cy="23.9" r="4.4"/><circle cx="13.02" cy="24.0" r="2.4"/><circle cx="18.1" cy="21.0" r="1.4"/><circle cx="34.84" cy="23.87" r="2.4"/><circle cx="43.4" cy="23.9" r="4.4"/><circle cx="29.7" cy="26.9" r="1.4"/><circle cx="16.7" cy="28.15" r="1.7"/><circle cx="20.98" cy="29.8" r="1.4"/><circle cx="28.14" cy="31.07" r="1.7"/><circle cx="34.84" cy="30.57" r="2.9"/><circle cx="9.99" cy="32.08" r="3.4"/><circle cx="17.35" cy="35.1" r="2.8"/><circle cx="24.0" cy="35.0" r="2.4"/><circle cx="31.97" cy="38.03" r="3.4"/><circle cx="23.9" cy="43.5" r="4.3"/></g></svg><div class="t" style="left:73.00px;top:430.17px;font-size:29.4px;line-height:35.28px;color:#6b6b6b;transform:scaleX(0.9340);">Abelardo Perez</div><svg style="position:absolute;left:630.3px;top:430.2px;" width="42" height="39" viewBox="0 0 42 39" fill="none"><g stroke="#666" stroke-width="3" stroke-linecap="round" stroke-linejoin="round"><path d="M21.3 2.7 V25.4"/><path d="M13.9 18.2 L21.3 25.6 L28.7 18.2"/><path d="M12.9 11.2 C4.2 11.8 2.2 17 2.2 24 C2.2 33 6 36.1 12 36.1 H30.6 C36.6 36.1 39.8 33 39.8 24 C39.8 17 38 11.8 29.6 11.2"/></g></svg><svg style="position:absolute;left:711.8px;top:432.2px;" width="10" height="35" viewBox="0 0 10 35" fill="none"><g fill="#666"><circle cx="5" cy="5" r="4.1"/><circle cx="5" cy="17" r="4.1"/><circle cx="5" cy="29.1" r="4.1"/></g></svg></div><div class="card cb" style="top:250px;height:502.4px;width:765px"><div class="t" style="left:15.27px;top:20.49px;font-size:31.6px;line-height:37.92px;color:#4886ef;">OT1137MTO</div><div class="t" style="left:15.55px;top:66.30px;font-size:26.2px;line-height:31.44px;color:#6b6b6b;transform:scaleX(0.9750);">Created</div><div class="t" style="left:112.68px;top:66.30px;font-size:26.2px;line-height:31.44px;color:#6b6b6b;transform:scaleX(0.9603);">by</div><div class="t" style="left:147.09px;top:66.30px;font-size:26.2px;line-height:31.44px;color:#6b6b6b;transform:scaleX(1.0082);">Jonas</div><div class="t" style="left:223.78px;top:66.30px;font-size:26.2px;line-height:31.44px;color:#6b6b6b;transform:scaleX(0.9946);">Campos</div><div style="position:absolute;left:16px;top:112px;width:733px;height:103.5px;background:#f7f7f7;border-radius:8px"></div><div class="t" style="left:28.19px;top:126.98px;font-size:29.6px;line-height:35.52px;color:#0a0a0a;font-weight:700;transform:scaleX(0.8908);">Asset:</div><div class="t" style="left:112.70px;top:126.98px;font-size:29.6px;line-height:35.52px;color:#0a0a0a;transform:scaleX(0.8649);">{</div><div class="t" style="left:128.47px;top:126.98px;font-size:29.6px;line-height:35.52px;color:#0a0a0a;transform:scaleX(0.9237);">MON-FA-0001</div><div class="t" style="left:315.20px;top:126.98px;font-size:29.6px;line-height:35.52px;color:#0a0a0a;transform:scaleX(0.8649);">}</div><div class="t" style="left:330.24px;top:126.98px;font-size:29.6px;line-height:35.52px;color:#0a0a0a;transform:scaleX(0.9147);">MONTADORA</div><div class="t" style="left:512.71px;top:126.98px;font-size:29.6px;line-height:35.52px;color:#0a0a0a;transform:scaleX(0.9539);">-</div><div class="t" style="left:528.35px;top:126.98px;font-size:29.6px;line-height:35.52px;color:#0a0a0a;transform:scaleX(0.8641);">FA</div><div class="t" style="left:567.28px;top:126.98px;font-size:29.6px;line-height:35.52px;color:#0a0a0a;transform:scaleX(0.8958);">FRUNIV</div><div class="t" style="left:27.22px;top:170.18px;font-size:29.6px;line-height:35.52px;color:#0a0a0a;transform:scaleX(0.9919);">22222.0111.07</div><div class="t" style="left:228.77px;top:170.18px;font-size:29.6px;line-height:35.52px;color:#0a0a0a;transform:scaleX(0.9894);">110v</div><div style="position:absolute;left:16px;top:232px;width:733px;height:71.6px;background:#f7f7f7;border-radius:8px"></div><div class="t" style="left:32.25px;top:246.48px;font-size:29.6px;line-height:35.52px;color:#0a0a0a;font-weight:700;transform:scaleX(0.9048);">Task:</div><div class="t" style="left:102.56px;top:246.48px;font-size:29.6px;line-height:35.52px;color:#0a0a0a;transform:scaleX(1.0065);">correctivo</div><div style="position:absolute;left:698px;top:247.5px;width:40px;height:40px;border-radius:9px;background:#fff"><svg width="40" height="40" viewBox="0 0 40 40" fill="none" style="display:block"><path d="M12.9 15.8 H26.5 M12.9 24.4 H26.5" stroke="#f0932b" stroke-width="3" stroke-linecap="round"/></svg></div><div style="position:absolute;left:16px;top:320px;width:656px;height:8px;border-radius:4px;background:#ebebeb"></div><div class="t" style="left:711.83px;top:307.52px;font-size:24.6px;line-height:29.52px;color:#0a0a0a;font-weight:700;transform:scaleX(0.8723);">0 %</div><div style="position:absolute;left:16px;top:343.8px;width:131.2px;height:47.6px;border-radius:10px;background:#f7f7f7"><svg style="position:absolute;left:16px;top:9.4px;" width="26" height="30" viewBox="0 0 26 30" fill="none"><g stroke="#666" stroke-width="1.9" stroke-linecap="round"><circle cx="13" cy="16.8" r="11"/><path d="M8.6 2 H17.4"/><path d="M13 9 V16.2"/></g></svg><div class="t" style="left:59.25px;top:9.13px;font-size:24.8px;line-height:29.76px;color:#6b6b6b;font-weight:700;transform:scaleX(0.9570);">00:10</div></div><div style="position:absolute;left:155px;top:343.8px;width:193.4px;height:47.6px;border-radius:10px;background:#f7f7f7"><svg style="position:absolute;left:14.6px;top:9.6px;" width="28" height="30" viewBox="0 0 28 30" fill="none"><g stroke="#666" stroke-width="1.9" stroke-linecap="round"><rect x="1.9" y="4.2" width="24.2" height="23.6" rx="6.5"/><path d="M8.8 1.2 V6.6"/><path d="M19.2 1.2 V6.6"/><path d="M2.2 10.6 H25.8"/></g><g fill="#666"><circle cx="8.6" cy="17.8" r="1.35"/><circle cx="14" cy="17.8" r="1.35"/><circle cx="19.4" cy="17.8" r="1.35"/><circle cx="8.6" cy="21.7" r="1.35"/><circle cx="14" cy="21.7" r="1.35"/><circle cx="19.4" cy="21.7" r="1.35"/></g></svg><div class="t" style="left:59.75px;top:8.13px;font-size:24.8px;line-height:29.76px;color:#6b6b6b;font-weight:700;transform:scaleX(0.9634);">2025-07-10</div></div><div style="position:absolute;left:0;top:397.2px;width:765px;height:10.5px;background:linear-gradient(#fff,#f2f2f2)"></div><div style="position:absolute;left:16px;top:425.7px;width:48px;height:48px;border-radius:50%;background:#4886ef"></div><div class="t" style="left:22.87px;top:433.78px;font-size:25.8px;line-height:30.96px;color:#fff;transform:scaleX(1.0849);-webkit-text-stroke:0.25px #fff;">JC</div><div class="t" style="left:72.56px;top:430.17px;font-size:29.4px;line-height:35.28px;color:#6b6b6b;transform:scaleX(0.9539);">Jonas Campos</div><svg style="position:absolute;left:630.3px;top:430.2px;" width="42" height="39" viewBox="0 0 42 39" fill="none"><g stroke="#666" stroke-width="3" stroke-linecap="round" stroke-linejoin="round"><path d="M21.3 2.7 V25.4"/><path d="M13.9 18.2 L21.3 25.6 L28.7 18.2"/><path d="M12.9 11.2 C4.2 11.8 2.2 17 2.2 24 C2.2 33 6 36.1 12 36.1 H30.6 C36.6 36.1 39.8 33 39.8 24 C39.8 17 38 11.8 29.6 11.2"/></g></svg><svg style="position:absolute;left:711.8px;top:432.2px;" width="10" height="35" viewBox="0 0 10 35" fill="none"><g fill="#666"><circle cx="5" cy="5" r="4.1"/><circle cx="5" cy="17" r="4.1"/><circle cx="5" cy="29.1" r="4.1"/></g></svg></div><div class="card cb" style="top:770px;height:502.4px;width:765px"><div class="t" style="left:15.27px;top:20.49px;font-size:31.6px;line-height:37.92px;color:#4886ef;">OT1136MTO</div><div class="t" style="left:15.55px;top:66.30px;font-size:26.2px;line-height:31.44px;color:#6b6b6b;transform:scaleX(0.9750);">Created</div><div class="t" style="left:112.68px;top:66.30px;font-size:26.2px;line-height:31.44px;color:#6b6b6b;transform:scaleX(0.9603);">by</div><div class="t" style="left:146.47px;top:66.30px;font-size:26.2px;line-height:31.44px;color:#6b6b6b;transform:scaleX(0.9898);">Imène</div><div class="t" style="left:224.29px;top:66.30px;font-size:26.2px;line-height:31.44px;color:#6b6b6b;transform:scaleX(0.9874);">Chakroun</div><div style="position:absolute;left:16px;top:112px;width:733px;height:103.5px;background:#f7f7f7;border-radius:8px"></div><div class="t" style="left:28.19px;top:126.98px;font-size:29.6px;line-height:35.52px;color:#0a0a0a;font-weight:700;transform:scaleX(0.8908);">Asset:</div><div class="t" style="left:112.70px;top:126.98px;font-size:29.6px;line-height:35.52px;color:#0a0a0a;transform:scaleX(0.8649);">{</div><div class="t" style="left:128.47px;top:126.98px;font-size:29.6px;line-height:35.52px;color:#0a0a0a;transform:scaleX(0.9237);">MON-FA-0001</div><div class="t" style="left:315.20px;top:126.98px;font-size:29.6px;line-height:35.52px;color:#0a0a0a;transform:scaleX(0.8649);">}</div><div class="t" style="left:330.24px;top:126.98px;font-size:29.6px;line-height:35.52px;color:#0a0a0a;transform:scaleX(0.9147);">MONTADORA</div><div class="t" style="left:512.71px;top:126.98px;font-size:29.6px;line-height:35.52px;color:#0a0a0a;transform:scaleX(0.9539);">-</div><div class="t" style="left:528.35px;top:126.98px;font-size:29.6px;line-height:35.52px;color:#0a0a0a;transform:scaleX(0.8641);">FA</div><div class="t" style="left:567.28px;top:126.98px;font-size:29.6px;line-height:35.52px;color:#0a0a0a;transform:scaleX(0.8958);">FRUNIV</div><div class="t" style="left:27.22px;top:170.18px;font-size:29.6px;line-height:35.52px;color:#0a0a0a;transform:scaleX(0.9919);">22222.0111.07</div><div class="t" style="left:228.77px;top:170.18px;font-size:29.6px;line-height:35.52px;color:#0a0a0a;transform:scaleX(0.9894);">110v</div><div style="position:absolute;left:16px;top:232px;width:733px;height:71.6px;background:#f7f7f7;border-radius:8px"></div><div class="t" style="left:32.25px;top:246.48px;font-size:29.6px;line-height:35.52px;color:#0a0a0a;font-weight:700;transform:scaleX(0.9048);">Task:</div><div class="t" style="left:103.72px;top:246.48px;font-size:29.6px;line-height:35.52px;color:#0a0a0a;transform:scaleX(0.9435);">Tarea</div><div class="t" style="left:180.81px;top:246.48px;font-size:29.6px;line-height:35.52px;color:#0a0a0a;transform:scaleX(0.9665);">Correctiva</div><div style="position:absolute;left:698px;top:247.5px;width:40px;height:40px;border-radius:9px;background:#fff"><svg width="40" height="40" viewBox="0 0 40 40" fill="none" style="display:block"><path d="M12.9 15.8 H26.5 M12.9 24.4 H26.5" stroke="#f0932b" stroke-width="3" stroke-linecap="round"/></svg></div><div style="position:absolute;left:16px;top:320px;width:628.5px;height:8px;border-radius:4px;background:#22c35d"></div><div class="t" style="left:684.06px;top:307.52px;font-size:24.6px;line-height:29.52px;color:#0a0a0a;font-weight:700;transform:scaleX(0.9327);">100 %</div><div style="position:absolute;left:16px;top:343.8px;width:131.2px;height:47.6px;border-radius:10px;background:#f7f7f7"><svg style="position:absolute;left:16px;top:9.4px;" width="26" height="30" viewBox="0 0 26 30" fill="none"><g stroke="#666" stroke-width="1.9" stroke-linecap="round"><circle cx="13" cy="16.8" r="11"/><path d="M8.6 2 H17.4"/><path d="M13 9 V16.2"/></g></svg><div class="t" style="left:59.25px;top:9.13px;font-size:24.8px;line-height:29.76px;color:#6b6b6b;font-weight:700;transform:scaleX(0.9570);">00:10</div></div><div style="position:absolute;left:155px;top:343.8px;width:193.4px;height:47.6px;border-radius:10px;background:#f7f7f7"><svg style="position:absolute;left:14.6px;top:9.6px;" width="28" height="30" viewBox="0 0 28 30" fill="none"><g stroke="#666" stroke-width="1.9" stroke-linecap="round"><rect x="1.9" y="4.2" width="24.2" height="23.6" rx="6.5"/><path d="M8.8 1.2 V6.6"/><path d="M19.2 1.2 V6.6"/><path d="M2.2 10.6 H25.8"/></g><g fill="#666"><circle cx="8.6" cy="17.8" r="1.35"/><circle cx="14" cy="17.8" r="1.35"/><circle cx="19.4" cy="17.8" r="1.35"/><circle cx="8.6" cy="21.7" r="1.35"/><circle cx="14" cy="21.7" r="1.35"/><circle cx="19.4" cy="21.7" r="1.35"/></g></svg><div class="t" style="left:59.75px;top:8.13px;font-size:24.8px;line-height:29.76px;color:#6b6b6b;font-weight:700;transform:scaleX(0.9634);">2025-07-10</div></div><div style="position:absolute;left:0;top:397.2px;width:765px;height:10.5px;background:linear-gradient(#fff,#f2f2f2)"></div><div style="position:absolute;left:16px;top:425.7px;width:48px;height:48px;border-radius:50%;background:#4886ef"></div><div class="t" style="left:22.87px;top:433.78px;font-size:25.8px;line-height:30.96px;color:#fff;transform:scaleX(1.0849);-webkit-text-stroke:0.25px #fff;">JC</div><div class="t" style="left:72.56px;top:430.17px;font-size:29.4px;line-height:35.28px;color:#6b6b6b;transform:scaleX(0.9539);">Jonas Campos</div><svg style="position:absolute;left:630.3px;top:430.2px;" width="42" height="39" viewBox="0 0 42 39" fill="none"><g stroke="#666" stroke-width="3" stroke-linecap="round" stroke-linejoin="round"><path d="M21.3 2.7 V25.4"/><path d="M13.9 18.2 L21.3 25.6 L28.7 18.2"/><path d="M12.9 11.2 C4.2 11.8 2.2 17 2.2 24 C2.2 33 6 36.1 12 36.1 H30.6 C36.6 36.1 39.8 33 39.8 24 C39.8 17 38 11.8 29.6 11.2"/></g></svg><svg style="position:absolute;left:711.8px;top:432.2px;" width="10" height="35" viewBox="0 0 10 35" fill="none"><g fill="#666"><circle cx="5" cy="5" r="4.1"/><circle cx="5" cy="17" r="4.1"/><circle cx="5" cy="29.1" r="4.1"/></g></svg></div></div><div class="colhead"></div><div style="position:absolute;left:16px;top:24px;width:8px;height:48px;border-radius:4px;background:#f09a2c"></div><div class="t" style="left:57.00px;top:26.17px;font-size:34.9px;line-height:41.88px;color:#0a0a0a;transform:scaleX(0.9756);">WOs in Process</div><div class="t" style="left:674.87px;top:33.12px;font-size:24.6px;line-height:29.52px;color:#666;transform:scaleX(0.9843);">2881</div><svg style="position:absolute;left:743px;top:27px;" width="40" height="44" viewBox="0 0 40 44" fill="none"><g stroke="#666" stroke-width="3" stroke-linecap="round" stroke-linejoin="round"><path d="M10.6 8.3 A17 17 0 1 1 4.5 13.8"/><path d="M16.9 0.9 L10 7.4 L17.6 12.9"/></g></svg></div>
<div class="col" style="left:1672px"><div class="cards"><div class="card cb" style="top:0px;height:502.4px;width:765px"><div class="t" style="left:15.27px;top:20.49px;font-size:31.6px;line-height:37.92px;color:#4886ef;">OT1126MTO</div><div class="t" style="left:15.55px;top:66.30px;font-size:26.2px;line-height:31.44px;color:#6b6b6b;transform:scaleX(0.9750);">Created</div><div class="t" style="left:112.68px;top:66.30px;font-size:26.2px;line-height:31.44px;color:#6b6b6b;transform:scaleX(0.9603);">by</div><div class="t" style="left:147.09px;top:66.30px;font-size:26.2px;line-height:31.44px;color:#6b6b6b;transform:scaleX(1.0082);">Jonas</div><div class="t" style="left:223.78px;top:66.30px;font-size:26.2px;line-height:31.44px;color:#6b6b6b;transform:scaleX(0.9946);">Campos</div><div style="position:absolute;left:16px;top:112px;width:733px;height:103.5px;background:#fdf4f4;border-radius:8px"></div><div class="t" style="left:28.19px;top:126.98px;font-size:29.6px;line-height:35.52px;color:#0a0a0a;font-weight:700;transform:scaleX(0.8908);">Asset:</div><div class="t" style="left:112.70px;top:126.98px;font-size:29.6px;line-height:35.52px;color:#0a0a0a;transform:scaleX(0.8649);">{</div><div class="t" style="left:128.47px;top:126.98px;font-size:29.6px;line-height:35.52px;color:#0a0a0a;transform:scaleX(0.9237);">MON-FA-0001</div><div class="t" style="left:315.20px;top:126.98px;font-size:29.6px;line-height:35.52px;color:#0a0a0a;transform:scaleX(0.8649);">}</div><div class="t" style="left:330.24px;top:126.98px;font-size:29.6px;line-height:35.52px;color:#0a0a0a;transform:scaleX(0.9147);">MONTADORA</div><div class="t" style="left:512.71px;top:126.98px;font-size:29.6px;line-height:35.52px;color:#0a0a0a;transform:scaleX(0.9539);">-</div><div class="t" style="left:528.35px;top:126.98px;font-size:29.6px;line-height:35.52px;color:#0a0a0a;transform:scaleX(0.8641);">FA</div><div class="t" style="left:567.28px;top:126.98px;font-size:29.6px;line-height:35.52px;color:#0a0a0a;transform:scaleX(0.8958);">FRUNIV</div><div class="t" style="left:27.22px;top:170.18px;font-size:29.6px;line-height:35.52px;color:#0a0a0a;transform:scaleX(0.9919);">22222.0111.07</div><div class="t" style="left:228.77px;top:170.18px;font-size:29.6px;line-height:35.52px;color:#0a0a0a;transform:scaleX(0.9894);">110v</div><div style="position:absolute;left:697.5px;top:143.7px;width:40px;height:40px;border-radius:9px;background:#fff"><svg width="40" height="40" viewBox="0 0 40 40" fill="none" style="display:block"><circle cx="18.9" cy="20.6" r="13.2" stroke="#ef4444" stroke-width="2.2"/><path d="M18.9 15.2 V22.6" stroke="#ef4444" stroke-width="2.1" stroke-linecap="round"/><circle cx="18.9" cy="26.6" r="1.5" fill="#ef4444"/></svg></div><div style="position:absolute;left:16px;top:232px;width:733px;height:71.6px;background:#f7f7f7;border-radius:8px"></div><div class="t" style="left:32.25px;top:246.48px;font-size:29.6px;line-height:35.52px;color:#0a0a0a;font-weight:700;transform:scaleX(0.9048);">Task:</div><div class="t" style="left:103.15px;top:246.48px;font-size:29.6px;line-height:35.52px;color:#0a0a0a;transform:scaleX(1.0123);">test</div><div style="position:absolute;left:698px;top:247.5px;width:40px;height:40px;border-radius:9px;background:#fff"><svg width="40" height="40" viewBox="0 0 40 40" fill="none" style="display:block"><path d="M12.9 15.8 H26.5 M12.9 24.4 H26.5" stroke="#f0932b" stroke-width="3" stroke-linecap="round"/></svg></div><div style="position:absolute;left:16px;top:320px;width:656px;height:8px;border-radius:4px;background:#ebebeb"></div><div class="t" style="left:711.83px;top:307.52px;font-size:24.6px;line-height:29.52px;color:#0a0a0a;font-weight:700;transform:scaleX(0.8723);">0 %</div><div style="position:absolute;left:16px;top:343.8px;width:131.2px;height:47.6px;border-radius:10px;background:#f7f7f7"><svg style="position:absolute;left:16px;top:9.4px;" width="26" height="30" viewBox="0 0 26 30" fill="none"><g stroke="#666" stroke-width="1.9" stroke-linecap="round"><circle cx="13" cy="16.8" r="11"/><path d="M8.6 2 H17.4"/><path d="M13 9 V16.2"/></g></svg><div class="t" style="left:59.25px;top:9.13px;font-size:24.8px;line-height:29.76px;color:#6b6b6b;font-weight:700;transform:scaleX(0.9570);">00:10</div></div><div style="position:absolute;left:155px;top:343.8px;width:193.4px;height:47.6px;border-radius:10px;background:#f7f7f7"><svg style="position:absolute;left:14.6px;top:9.6px;" width="28" height="30" viewBox="0 0 28 30" fill="none"><g stroke="#666" stroke-width="1.9" stroke-linecap="round"><rect x="1.9" y="4.2" width="24.2" height="23.6" rx="6.5"/><path d="M8.8 1.2 V6.6"/><path d="M19.2 1.2 V6.6"/><path d="M2.2 10.6 H25.8"/></g><g fill="#666"><circle cx="8.6" cy="17.8" r="1.35"/><circle cx="14" cy="17.8" r="1.35"/><circle cx="19.4" cy="17.8" r="1.35"/><circle cx="8.6" cy="21.7" r="1.35"/><circle cx="14" cy="21.7" r="1.35"/><circle cx="19.4" cy="21.7" r="1.35"/></g></svg><div class="t" style="left:59.75px;top:8.13px;font-size:24.8px;line-height:29.76px;color:#6b6b6b;font-weight:700;transform:scaleX(0.9604);">2025-07-03</div></div><div style="position:absolute;left:0;top:397.2px;width:765px;height:10.5px;background:linear-gradient(#fff,#f2f2f2)"></div><svg style="position:absolute;left:16px;top:425.6px;" width="48" height="48" viewBox="0 0 48 48" fill="none"><defs><linearGradient id="rb" x1="0" x2="1"><stop offset="0" stop-color="#7a5cf0"/><stop offset=".55" stop-color="#d8479a"/><stop offset="1" stop-color="#f04a3a"/></linearGradient></defs><polygon points="3.8,20.8 14.2,16.7 31.3,19.3 33.8,21.3 30.8,34.4 28.3,41.4 19.2,47.7 10.1,41.4 6.1,34.4 3.3,26.3" fill="#2d2f3a"/><polygon points="26.8,22.8 34.8,23.3 45.9,21.3 45.4,26.3 41.4,30.4 35.3,33.4 29.3,33.9 24.8,28.8" fill="#8b74c9"/><polygon points="7.1,29.8 13.2,24.3 22.2,20.3 29.3,14.2 31.8,12.2 31.8,16.2 27.3,22.3 22.2,26.3 8.6,30.4" fill="#c5dcf7"/><polygon points="8.6,30.4 22.2,26.3 27.3,22.3 29.5,24 24,29 10,32" fill="#6aa5f0"/><polygon points="20.2,2.1 27.8,0.9 31.8,11.2 24.3,12.7" fill="#2d2f3a"/><ellipse cx="16.7" cy="10.7" rx="5.2" ry="4.2" fill="#f6d24d"/><circle cx="17.4" cy="16.6" r="3.3" fill="#f4f4f4"/><circle cx="29.3" cy="7.7" r="2.8" fill="#f4f4f4"/><circle cx="5.2" cy="25.2" r="2.4" fill="#f4f4f4"/><polygon points="5.4,37.4 20.2,35.1 32.3,37.4 31.8,41.4 20.2,38.9 6.4,40.9" fill="url(#rb)"/><text x="8.6" y="34.2" font-family="Liberation Sans, sans-serif" font-size="5.4" font-weight="700" fill="#fff" textLength="20" lengthAdjust="spacingAndGlyphs">HEROES</text></svg><div class="t" style="left:70.82px;top:430.17px;font-size:29.4px;line-height:35.28px;color:#6b6b6b;transform:scaleX(0.9461);">Ramon Toro</div><svg style="position:absolute;left:630.3px;top:430.2px;" width="42" height="39" viewBox="0 0 42 39" fill="none"><g stroke="#666" stroke-width="3" stroke-linecap="round" stroke-linejoin="round"><path d="M21.3 2.7 V25.4"/><path d="M13.9 18.2 L21.3 25.6 L28.7 18.2"/><path d="M12.9 11.2 C4.2 11.8 2.2 17 2.2 24 C2.2 33 6 36.1 12 36.1 H30.6 C36.6 36.1 39.8 33 39.8 24 C39.8 17 38 11.8 29.6 11.2"/></g></svg><svg style="position:absolute;left:711.8px;top:432.2px;" width="10" height="35" viewBox="0 0 10 35" fill="none"><g fill="#666"><circle cx="5" cy="5" r="4.1"/><circle cx="5" cy="17" r="4.1"/><circle cx="5" cy="29.1" r="4.1"/></g></svg></div><div class="card cb" style="top:519.5px;height:502.4px;width:765px"><div class="t" style="left:15.27px;top:20.49px;font-size:31.6px;line-height:37.92px;color:#4886ef;">OT1124MTO</div><div class="t" style="left:15.55px;top:66.30px;font-size:26.2px;line-height:31.44px;color:#6b6b6b;transform:scaleX(0.9750);">Created</div><div class="t" style="left:112.68px;top:66.30px;font-size:26.2px;line-height:31.44px;color:#6b6b6b;transform:scaleX(0.9603);">by</div><div class="t" style="left:147.09px;top:66.30px;font-size:26.2px;line-height:31.44px;color:#6b6b6b;transform:scaleX(1.0082);">Jonas</div><div class="t" style="left:223.78px;top:66.30px;font-size:26.2px;line-height:31.44px;color:#6b6b6b;transform:scaleX(0.9946);">Campos</div><div style="position:absolute;left:16px;top:112px;width:733px;height:103.5px;background:#f7f7f7;border-radius:8px"></div><div class="t" style="left:28.19px;top:126.98px;font-size:29.6px;line-height:35.52px;color:#0a0a0a;font-weight:700;transform:scaleX(0.8908);">Asset:</div><div class="t" style="left:112.70px;top:126.98px;font-size:29.6px;line-height:35.52px;color:#0a0a0a;transform:scaleX(0.8649);">{</div><div class="t" style="left:128.47px;top:126.98px;font-size:29.6px;line-height:35.52px;color:#0a0a0a;transform:scaleX(0.9237);">MON-FA-0001</div><div class="t" style="left:315.20px;top:126.98px;font-size:29.6px;line-height:35.52px;color:#0a0a0a;transform:scaleX(0.8649);">}</div><div class="t" style="left:330.24px;top:126.98px;font-size:29.6px;line-height:35.52px;color:#0a0a0a;transform:scaleX(0.9147);">MONTADORA</div><div class="t" style="left:512.71px;top:126.98px;font-size:29.6px;line-height:35.52px;color:#0a0a0a;transform:scaleX(0.9539);">-</div><div class="t" style="left:528.35px;top:126.98px;font-size:29.6px;line-height:35.52px;color:#0a0a0a;transform:scaleX(0.8641);">FA</div><div class="t" style="left:567.28px;top:126.98px;font-size:29.6px;line-height:35.52px;color:#0a0a0a;transform:scaleX(0.8958);">FRUNIV</div><div class="t" style="left:27.22px;top:170.18px;font-size:29.6px;line-height:35.52px;color:#0a0a0a;transform:scaleX(0.9919);">22222.0111.07</div><div class="t" style="left:228.77px;top:170.18px;font-size:29.6px;line-height:35.52px;color:#0a0a0a;transform:scaleX(0.9894);">110v</div><div style="position:absolute;left:16px;top:232px;width:733px;height:71.6px;background:#f7f7f7;border-radius:8px"></div><div class="t" style="left:32.25px;top:246.48px;font-size:29.6px;line-height:35.52px;color:#0a0a0a;font-weight:700;transform:scaleX(0.9048);">Task:</div><div class="t" style="left:101.62px;top:246.48px;font-size:29.6px;line-height:35.52px;color:#0a0a0a;transform:scaleX(0.9237);">MON-FA-0001</div><div style="position:absolute;left:698px;top:247.5px;width:40px;height:40px;border-radius:9px;background:#fff"><svg width="40" height="40" viewBox="0 0 40 40" fill="none" style="display:block"><path d="M12.9 15.8 H26.5 M12.9 24.4 H26.5" stroke="#f0932b" stroke-width="3" stroke-linecap="round"/></svg></div><div style="position:absolute;left:16px;top:320px;width:656px;height:8px;border-radius:4px;background:#ebebeb"></div><div class="t" style="left:711.83px;top:307.52px;font-size:24.6px;line-height:29.52px;color:#0a0a0a;font-weight:700;transform:scaleX(0.8723);">0 %</div><div style="position:absolute;left:16px;top:343.8px;width:131.2px;height:47.6px;border-radius:10px;background:#f7f7f7"><svg style="position:absolute;left:16px;top:9.4px;" width="26" height="30" viewBox="0 0 26 30" fill="none"><g stroke="#666" stroke-width="1.9" stroke-linecap="round"><circle cx="13" cy="16.8" r="11"/><path d="M8.6 2 H17.4"/><path d="M13 9 V16.2"/></g></svg><div class="t" style="left:59.25px;top:9.13px;font-size:24.8px;line-height:29.76px;color:#6b6b6b;font-weight:700;transform:scaleX(0.9570);">00:10</div></div><div style="position:absolute;left:155px;top:343.8px;width:193.4px;height:47.6px;border-radius:10px;background:#f7f7f7"><svg style="position:absolute;left:14.6px;top:9.6px;" width="28" height="30" viewBox="0 0 28 30" fill="none"><g stroke="#666" stroke-width="1.9" stroke-linecap="round"><rect x="1.9" y="4.2" width="24.2" height="23.6" rx="6.5"/><path d="M8.8 1.2 V6.6"/><path d="M19.2 1.2 V6.6"/><path d="M2.2 10.6 H25.8"/></g><g fill="#666"><circle cx="8.6" cy="17.8" r="1.35"/><circle cx="14" cy="17.8" r="1.35"/><circle cx="19.4" cy="17.8" r="1.35"/><circle cx="8.6" cy="21.7" r="1.35"/><circle cx="14" cy="21.7" r="1.35"/><circle cx="19.4" cy="21.7" r="1.35"/></g></svg><div class="t" style="left:59.75px;top:8.13px;font-size:24.8px;line-height:29.76px;color:#6b6b6b;font-weight:700;transform:scaleX(0.9634);">2025-07-07</div></div><div style="position:absolute;left:0;top:397.2px;width:765px;height:10.5px;background:linear-gradient(#fff,#f2f2f2)"></div><div style="position:absolute;left:16px;top:425.7px;width:48px;height:48px;border-radius:50%;background:#4886ef"></div><div class="t" style="left:22.87px;top:433.78px;font-size:25.8px;line-height:30.96px;color:#fff;transform:scaleX(1.0849);-webkit-text-stroke:0.25px #fff;">JC</div><div class="t" style="left:72.56px;top:430.17px;font-size:29.4px;line-height:35.28px;color:#6b6b6b;transform:scaleX(0.9539);">Jonas Campos</div><svg style="position:absolute;left:630.3px;top:430.2px;" width="42" height="39" viewBox="0 0 42 39" fill="none"><g stroke="#666" stroke-width="3" stroke-linecap="round" stroke-linejoin="round"><path d="M21.3 2.7 V25.4"/><path d="M13.9 18.2 L21.3 25.6 L28.7 18.2"/><path d="M12.9 11.2 C4.2 11.8 2.2 17 2.2 24 C2.2 33 6 36.1 12 36.1 H30.6 C36.6 36.1 39.8 33 39.8 24 C39.8 17 38 11.8 29.6 11.2"/></g></svg><svg style="position:absolute;left:711.8px;top:432.2px;" width="10" height="35" viewBox="0 0 10 35" fill="none"><g fill="#666"><circle cx="5" cy="5" r="4.1"/><circle cx="5" cy="17" r="4.1"/><circle cx="5" cy="29.1" r="4.1"/></g></svg></div><div class="card cb" style="top:1039.5px;height:502.4px;width:765px"><div class="t" style="left:15.25px;top:20.49px;font-size:31.6px;line-height:37.92px;color:#4886ef;transform:scaleX(1.0141);">OT1115MTO</div><div class="t" style="left:15.55px;top:66.30px;font-size:26.2px;line-height:31.44px;color:#6b6b6b;transform:scaleX(0.9750);">Created</div><div class="t" style="left:112.68px;top:66.30px;font-size:26.2px;line-height:31.44px;color:#6b6b6b;transform:scaleX(0.9603);">by</div><div class="t" style="left:147.09px;top:66.30px;font-size:26.2px;line-height:31.44px;color:#6b6b6b;transform:scaleX(1.0082);">Jonas</div><div class="t" style="left:223.78px;top:66.30px;font-size:26.2px;line-height:31.44px;color:#6b6b6b;transform:scaleX(0.9946);">Campos</div><div style="position:absolute;left:16px;top:112px;width:733px;height:103.5px;background:#f7f7f7;border-radius:8px"></div><div class="t" style="left:28.19px;top:126.98px;font-size:29.6px;line-height:35.52px;color:#0a0a0a;font-weight:700;transform:scaleX(0.8908);">Asset:</div><div class="t" style="left:118.86px;top:126.98px;font-size:29.6px;line-height:35.52px;color:#0a0a0a;transform:scaleX(1.0146);">05011142</div><div class="t" style="left:255.72px;top:126.98px;font-size:29.6px;line-height:35.52px;color:#0a0a0a;transform:scaleX(0.9919);">22222.0111.07</div><div class="t" style="left:455.79px;top:126.98px;font-size:29.6px;line-height:35.52px;color:#0a0a0a;transform:scaleX(0.9147);">MONTADORA</div><div class="t" style="left:637.71px;top:126.98px;font-size:29.6px;line-height:35.52px;color:#0a0a0a;transform:scaleX(0.9539);">-</div><div class="t" style="left:653.40px;top:126.98px;font-size:29.6px;line-height:35.52px;color:#0a0a0a;transform:scaleX(0.8641);">FA</div><div style="position:absolute;left:16px;top:232px;width:733px;height:71.6px;background:#f7f7f7;border-radius:8px"></div><div class="t" style="left:32.25px;top:246.48px;font-size:29.6px;line-height:35.52px;color:#0a0a0a;font-weight:700;transform:scaleX(0.9048);">Task:</div><div class="t" style="left:102.56px;top:246.48px;font-size:29.6px;line-height:35.52px;color:#0a0a0a;transform:scaleX(1.0065);">correctivo</div><div style="position:absolute;left:698px;top:247.5px;width:40px;height:40px;border-radius:9px;background:#fff"><svg width="40" height="40" viewBox="0 0 40 40" fill="none" style="display:block"><path d="M12.9 15.8 H26.5 M12.9 24.4 H26.5" stroke="#f0932b" stroke-width="3" stroke-linecap="round"/></svg></div><div style="position:absolute;left:16px;top:320px;width:656px;height:8px;border-radius:4px;background:#ebebeb"></div><div class="t" style="left:711.83px;top:307.52px;font-size:24.6px;line-height:29.52px;color:#0a0a0a;font-weight:700;transform:scaleX(0.8723);">0 %</div><div style="position:absolute;left:16px;top:343.8px;width:131.2px;height:47.6px;border-radius:10px;background:#f7f7f7"><svg style="position:absolute;left:16px;top:9.4px;" width="26" height="30" viewBox="0 0 26 30" fill="none"><g stroke="#666" stroke-width="1.9" stroke-linecap="round"><circle cx="13" cy="16.8" r="11"/><path d="M8.6 2 H17.4"/><path d="M13 9 V16.2"/></g></svg><div class="t" style="left:59.25px;top:9.13px;font-size:24.8px;line-height:29.76px;color:#6b6b6b;font-weight:700;transform:scaleX(0.9570);">00:10</div></div><div style="position:absolute;left:155px;top:343.8px;width:193.4px;height:47.6px;border-radius:10px;background:#f7f7f7"><svg style="position:absolute;left:14.6px;top:9.6px;" width="28" height="30" viewBox="0 0 28 30" fill="none"><g stroke="#666" stroke-width="1.9" stroke-linecap="round"><rect x="1.9" y="4.2" width="24.2" height="23.6" rx="6.5"/><path d="M8.8 1.2 V6.6"/><path d="M19.2 1.2 V6.6"/><path d="M2.2 10.6 H25.8"/></g><g fill="#666"><circle cx="8.6" cy="17.8" r="1.35"/><circle cx="14" cy="17.8" r="1.35"/><circle cx="19.4" cy="17.8" r="1.35"/><circle cx="8.6" cy="21.7" r="1.35"/><circle cx="14" cy="21.7" r="1.35"/><circle cx="19.4" cy="21.7" r="1.35"/></g></svg><div class="t" style="left:59.75px;top:8.13px;font-size:24.8px;line-height:29.76px;color:#6b6b6b;font-weight:700;transform:scaleX(0.9634);">2025-07-07</div></div><div style="position:absolute;left:0;top:397.2px;width:765px;height:10.5px;background:linear-gradient(#fff,#f2f2f2)"></div><div style="position:absolute;left:16px;top:425.7px;width:48px;height:48px;border-radius:50%;background:#4886ef"></div><div class="t" style="left:22.87px;top:433.78px;font-size:25.8px;line-height:30.96px;color:#fff;transform:scaleX(1.0849);-webkit-text-stroke:0.25px #fff;">JC</div><div class="t" style="left:72.56px;top:430.17px;font-size:29.4px;line-height:35.28px;color:#6b6b6b;transform:scaleX(0.9539);">Jonas Campos</div><svg style="position:absolute;left:630.3px;top:430.2px;" width="42" height="39" viewBox="0 0 42 39" fill="none"><g stroke="#666" stroke-width="3" stroke-linecap="round" stroke-linejoin="round"><path d="M21.3 2.7 V25.4"/><path d="M13.9 18.2 L21.3 25.6 L28.7 18.2"/><path d="M12.9 11.2 C4.2 11.8 2.2 17 2.2 24 C2.2 33 6 36.1 12 36.1 H30.6 C36.6 36.1 39.8 33 39.8 24 C39.8 17 38 11.8 29.6 11.2"/></g></svg><svg style="position:absolute;left:711.8px;top:432.2px;" width="10" height="35" viewBox="0 0 10 35" fill="none"><g fill="#666"><circle cx="5" cy="5" r="4.1"/><circle cx="5" cy="17" r="4.1"/><circle cx="5" cy="29.1" r="4.1"/></g></svg></div></div><div class="colhead"></div><div style="position:absolute;left:16px;top:24px;width:8px;height:48px;border-radius:4px;background:#4886ef"></div><div class="t" style="left:56.50px;top:26.17px;font-size:34.9px;line-height:41.88px;color:#0a0a0a;transform:scaleX(0.9521);">WOs in Review</div><div class="t" style="left:689.10px;top:33.12px;font-size:24.6px;line-height:29.52px;color:#666;">245</div><svg style="position:absolute;left:743px;top:27px;" width="40" height="44" viewBox="0 0 40 44" fill="none"><g stroke="#666" stroke-width="3" stroke-linecap="round" stroke-linejoin="round"><path d="M10.6 8.3 A17 17 0 1 1 4.5 13.8"/><path d="M16.9 0.9 L10 7.4 L17.6 12.9"/></g></svg></div>
<div class="redbox"></div>
<div class="fab"><svg width="112" height="112" viewBox="0 0 112 112" style="display:block"><path d="M56 44.6 V68.4 M44.1 56.5 H67.9" stroke="#fff" stroke-width="3.4"/></svg></div>
</div></body></html>
